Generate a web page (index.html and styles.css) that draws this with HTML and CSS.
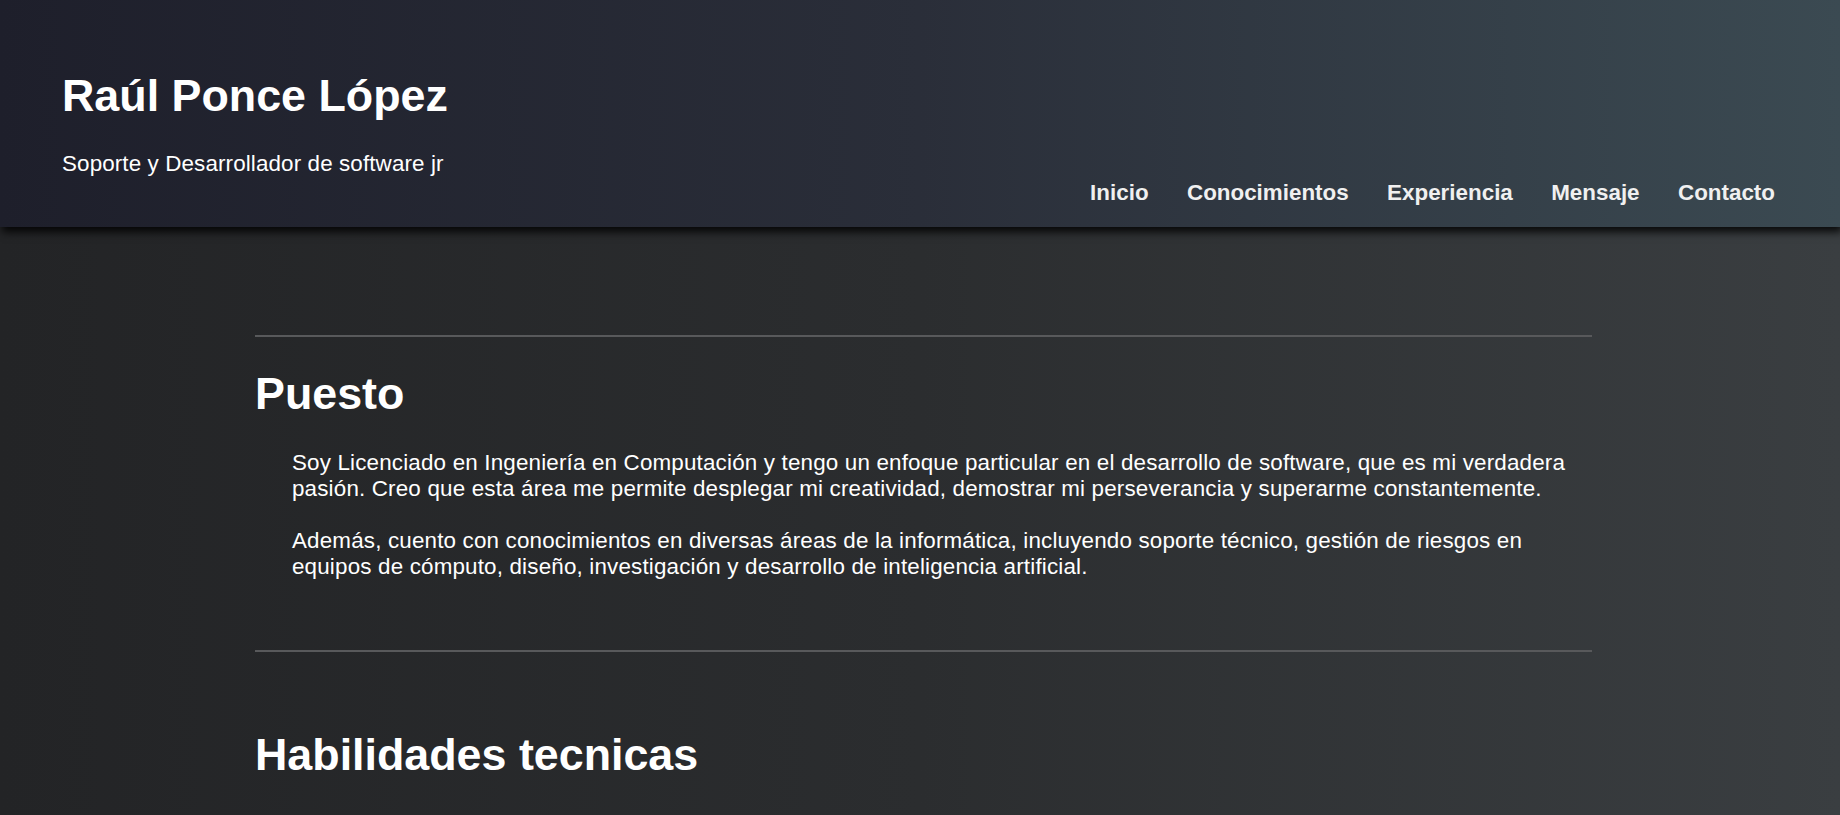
FILE: index.html
```html
<!DOCTYPE html>
<html lang="es">
<head>
<meta charset="utf-8">
<title>Raúl Ponce López</title>
<link rel="stylesheet" href="styles.css">
</head>
<body>
<header class="site-header">
  <div class="brand">
    <h1 class="brand-name">Raúl Ponce López</h1>
    <p class="brand-role">Soporte y Desarrollador de software jr</p>
  </div>
  <nav class="main-nav">
    <a href="#inicio" class="nav-link">Inicio</a>
    <a href="#conocimientos" class="nav-link">Conocimientos</a>
    <a href="#experiencia" class="nav-link">Experiencia</a>
    <a href="#mensaje" class="nav-link">Mensaje</a>
    <a href="#contacto" class="nav-link">Contacto</a>
  </nav>
</header>
<main class="content">
  <hr class="divider">
  <section class="block block-first" id="inicio">
    <h2 class="block-title">Puesto</h2>
    <p class="block-text">Soy Licenciado en Ingeniería en Computación y tengo un enfoque particular en el desarrollo de software, que es mi verdadera pasión. Creo que esta área me permite desplegar mi creatividad, demostrar mi perseverancia y superarme constantemente.</p>
    <p class="block-text">Además, cuento con conocimientos en diversas áreas de la informática, incluyendo soporte técnico, gestión de riesgos en equipos de cómputo, diseño, investigación y desarrollo de inteligencia artificial.</p>
  </section>
  <hr class="divider">
  <section class="block block-next" id="conocimientos">
    <h2 class="block-title">Habilidades tecnicas</h2>
  </section>
</main>
</body>
</html>
```
FILE: styles.css
```css
* {
  box-sizing: border-box;
}

html, body {
  margin: 0;
  padding: 0;
}

body {
  font-family: "Liberation Sans", Arial, sans-serif;
  color: #ffffff;
  background: linear-gradient(to right, #232426 0%, #2b2d2f 50%, #3a3e41 100%);
  background-attachment: fixed;
  min-height: 100vh;
}

.site-header {
  position: relative;
  z-index: 2;
  display: flex;
  justify-content: space-between;
  align-items: flex-end;
  padding: 70px 65px 21px 62px;
  background: linear-gradient(to right, #1e1f2b 0%, #2a2e39 50%, #3b4a52 100%);
  box-shadow: 2px 5px 8px rgba(0, 0, 0, 0.85);
}

.brand {
  padding-bottom: 29px;
}

.brand-name {
  margin: 0;
  font-size: 44.8px;
  font-weight: bold;
  line-height: normal;
  color: #ffffff;
}

.brand-role {
  margin: 30px 0 0;
  font-size: 22.4px;
  line-height: normal;
  letter-spacing: 0.12px;
  color: #ffffff;
}

.main-nav {
  display: flex;
  gap: 38.4px;
}

.nav-link {
  font-size: 22.4px;
  font-weight: bold;
  line-height: normal;
  color: #f0f0f0;
  text-decoration: none;
}

.content {
  padding: 108px 248px 40px 255px;
}

.divider {
  margin: 0;
  border: none;
  height: 2px;
  background: #58595b;
}

.block-title {
  margin: 0;
  font-size: 44.8px;
  font-weight: bold;
  line-height: normal;
  color: #ffffff;
}

.block-first .block-title {
  margin: 31px 0 31px;
}

.block-first {
  padding-bottom: 70px;
}

.block-next .block-title {
  margin: 77px 0 30px;
}

.block-text {
  margin: 0 0 25.7px;
  padding-left: 37px;
  font-size: 22.4px;
  line-height: normal;
  letter-spacing: 0.17px;
  color: #ffffff;
}

.block-text:last-child {
  margin-bottom: 0;
}
```
